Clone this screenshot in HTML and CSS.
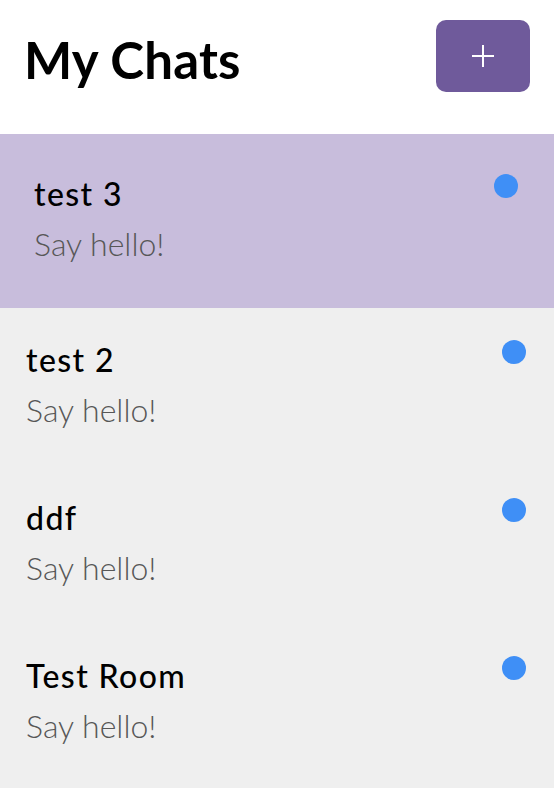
FILE: index.html
```html
<!DOCTYPE html>
<html lang="en">
<head>
<meta charset="utf-8">
<title>My Chats</title>
<link rel="stylesheet" href="styles.css">
</head>
<body>
  <header class="header">
    <h1 class="header-title">My Chats</h1>
    <button class="add-btn" aria-label="New chat">
      <svg width="24" height="24" viewBox="0 0 24 24" aria-hidden="true">
        <path d="M12 1v22M1 12h22" stroke="#fff" stroke-width="2" fill="none"/>
      </svg>
    </button>
  </header>
  <ul class="chat-list">
    <li class="chat chat-active">
      <div class="chat-text">
        <div class="chat-name">test 3</div>
        <div class="chat-preview">Say hello!</div>
      </div>
      <span class="chat-dot"></span>
    </li>
    <li class="chat">
      <div class="chat-text">
        <div class="chat-name">test 2</div>
        <div class="chat-preview">Say hello!</div>
      </div>
      <span class="chat-dot"></span>
    </li>
    <li class="chat">
      <div class="chat-text">
        <div class="chat-name">ddf</div>
        <div class="chat-preview">Say hello!</div>
      </div>
      <span class="chat-dot"></span>
    </li>
    <li class="chat">
      <div class="chat-text">
        <div class="chat-name">Test Room</div>
        <div class="chat-preview">Say hello!</div>
      </div>
      <span class="chat-dot"></span>
    </li>
  </ul>
</body>
</html>
```
FILE: styles.css
```css
* { box-sizing: border-box; }

html, body {
  margin: 0;
  padding: 0;
  background: #efefef;
  font-family: Lato, "Noto Sans", sans-serif;
}

.header {
  height: 134px;
  background: #ffffff;
  display: flex;
  justify-content: space-between;
  align-items: flex-start;
  padding: 20px 24px 0 24px;
}

.header-title {
  margin: 10px 0 0 0;
  font-size: 51px;
  line-height: 60px;
  font-weight: 700;
  color: #000;
  letter-spacing: 0.2px;
}

.add-btn {
  width: 94px;
  height: 72px;
  border: none;
  border-radius: 10px;
  background: #6f5a9b;
  display: flex;
  align-items: center;
  justify-content: center;
  padding: 0;
  cursor: pointer;
}

.chat-list {
  list-style: none;
  margin: 0;
  padding: 0;
}

.chat {
  display: flex;
  justify-content: space-between;
  align-items: flex-start;
  padding: 32px 28px 36px 26px;
}

.chat-active {
  background: #c8bddc;
  padding: 40px 36px 44px 34px;
}

.chat-name {
  font-size: 32px;
  line-height: 40px;
  font-weight: 500;
  color: #000;
  letter-spacing: 1.4px;
}

.chat-preview {
  margin-top: 10px;
  font-size: 32px;
  line-height: 40px;
  font-weight: 300;
  color: #575757;
  letter-spacing: 0;
}

.chat-dot {
  width: 24px;
  height: 24px;
  border-radius: 50%;
  background: #3f8ff6;
  flex-shrink: 0;
}
```
